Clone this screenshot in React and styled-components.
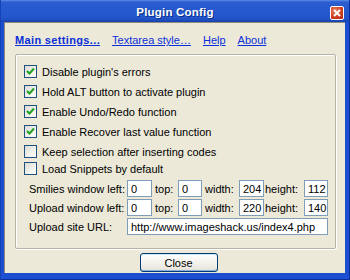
import React from 'react';
import styled, { createGlobalStyle } from 'styled-components';

const GlobalStyle = createGlobalStyle`
  html, body {
    margin: 0;
    padding: 0;
    background: #ffffff;
  }
  body {
    font-family: "Liberation Sans", Arial, sans-serif;
    font-size: 11px;
  }
`;

const Window = styled.div`
  width: 350px;
  height: 280px;
  box-sizing: border-box;
  display: flex;
  flex-direction: column;
  background: #1c4fcf;
  border-left: 1px solid #1642b8;
  border-right: 1px solid #0b2fa0;
  border-bottom: 1px solid #0b2fa0;
`;

const TitleBar = styled.div`
  height: 22px;
  flex: 0 0 22px;
  position: relative;
  display: flex;
  align-items: center;
  justify-content: center;
  background: linear-gradient(
    to bottom,
    #6e9ae8 0px,
    #3a6bd8 1px,
    #2a5ccf 3px,
    #2458cd 12px,
    #2356ca 18px,
    #1b47b8 21px,
    #173fa8 22px
  );
`;

const Title = styled.span`
  color: #ffffff;
  font-weight: bold;
  font-size: 11.5px;
  letter-spacing: 0.2px;
  text-shadow: 1px 1px 0 #0d2e8a;
  margin-top: 2px;
`;

const CloseX = styled.div`
  position: absolute;
  right: 5px;
  top: 6px;
  width: 14px;
  height: 14px;
  border-radius: 2px;
  border: 1px solid #ffffff;
  box-sizing: border-box;
  background: radial-gradient(circle at 35% 30%, #e8805f 0%, #d13f22 55%, #a92a14 100%);
  display: flex;
  align-items: center;
  justify-content: center;
`;

const Frame = styled.div`
  flex: 1;
  display: flex;
  margin: 0 4px 6px 3px;
  border-top: 1px solid #8d8c7d;
  border-left: 1px solid #8d8c7d;
  background: #ece9d8;
`;

const Body = styled.div`
  flex: 1;
  display: flex;
  flex-direction: column;
  padding: 10px 9px 0 10px;
`;

const Tabs = styled.div`
  display: flex;
  gap: 12px;
  height: 14px;
  align-items: center;
`;

const TabLink = styled.a`
  color: #0a2fd8;
  text-decoration: underline;
  font-size: 11px;
  font-weight: ${p => (p.$active ? 'bold' : 'normal')};
  letter-spacing: ${p => (p.$active ? '0.35px' : '0')};
  cursor: pointer;
`;

const Group = styled.div`
  margin-top: 7px;
  height: 195px;
  box-sizing: border-box;
  border: 1px solid #b5b4a6;
  border-radius: 2px;
  box-shadow: inset 1px 1px 0 #ffffff, 1px 1px 0 #ffffff;
  padding: 10px 0 0 8px;
  display: flex;
  flex-direction: column;
`;

const CheckRow = styled.label`
  display: flex;
  align-items: center;
  height: 13px;
  margin-bottom: ${p => (p.$tight ? 4 : 7)}px;
  color: #000000;
`;

const Box = styled.span`
  width: 13px;
  height: 13px;
  box-sizing: border-box;
  border: 1px solid #1c5180;
  background: linear-gradient(135deg, #dcdcd3 0%, #f2f2ee 60%, #ffffff 100%);
  display: flex;
  align-items: center;
  justify-content: center;
  margin-right: 5px;
  flex: 0 0 13px;
`;

const Fields = styled.div`
  display: grid;
  grid-template-columns: 98px 25px 26px 24px 37px 25px 40px 24px;
  grid-auto-rows: 17px;
  row-gap: 2px;
  margin-left: 5px;
  margin-top: -2px;
  align-items: center;
`;

const FieldLabel = styled.span`
  padding-left: ${p => p.$pad || 0}px;
  white-space: nowrap;
  color: #000000;
`;

const Input = styled.div`
  height: 17px;
  box-sizing: border-box;
  border: 1px solid #7f9db9;
  background: #ffffff;
  padding: 0 0 0 3px;
  display: flex;
  align-items: center;
  color: #000000;
  grid-column: ${p => p.$span || 'auto'};
`;

const Footer = styled.div`
  display: flex;
  justify-content: center;
  padding: 4px 0 0 6px;
`;

const Button = styled.button`
  width: 78px;
  height: 19px;
  box-sizing: border-box;
  border: 1px solid #003c74;
  border-radius: 3px;
  background: linear-gradient(to bottom, #ffffff 0%, #f4f3ee 50%, #e8e6dc 90%, #d6d0c5 100%);
  box-shadow: inset 0 1px 0 #cee7ff, inset 0 -1px 0 #89ade4;
  font-family: "Liberation Sans", Arial, sans-serif;
  font-size: 11px;
  color: #000000;
  padding: 0;
`;

const Check = () => (
  <svg width="9" height="9" viewBox="0 0 9 9">
    <path d="M1 4 L3.5 6.5 L8 1.5" fill="none" stroke="#21a121" strokeWidth="2" />
  </svg>
);

const options = [
  { label: "Disable plugin's errors", checked: true },
  { label: 'Hold ALT button to activate plugin', checked: true },
  { label: 'Enable Undo/Redo function', checked: true },
  { label: 'Enable Recover last value function', checked: true },
  { label: 'Keep selection after inserting codes', checked: false, tight: true },
  { label: 'Load Snippets by default', checked: false }
];

const windowRows = [
  { label: 'Smilies window left:', left: '0', top: '0', width: '204', height: '112' },
  { label: 'Upload window left:', left: '0', top: '0', width: '220', height: '140' }
];

export default function App() {
  return (
    <>
      <GlobalStyle />
      <Window>
        <TitleBar>
          <Title>Plugin Config</Title>
          <CloseX>
            <svg width="8" height="8" viewBox="0 0 8 8">
              <path d="M1 1 L7 7 M7 1 L1 7" stroke="#ffffff" strokeWidth="2" />
            </svg>
          </CloseX>
        </TitleBar>
        <Frame>
          <Body>
            <Tabs>
              <TabLink $active>Main settings...</TabLink>
              <TabLink>Textarea style…</TabLink>
              <TabLink>Help</TabLink>
              <TabLink>About</TabLink>
            </Tabs>
            <Group>
              {options.map(o => (
                <CheckRow key={o.label} $tight={o.tight}>
                  <Box>{o.checked && <Check />}</Box>
                  {o.label}
                </CheckRow>
              ))}
              <Fields>
                {windowRows.map(r => (
                  <React.Fragment key={r.label}>
                    <FieldLabel>{r.label}</FieldLabel>
                    <Input>{r.left}</Input>
                    <FieldLabel $pad={3}>top:</FieldLabel>
                    <Input>{r.top}</Input>
                    <FieldLabel $pad={3}>width:</FieldLabel>
                    <Input>{r.width}</Input>
                    <FieldLabel $pad={1}>height:</FieldLabel>
                    <Input>{r.height}</Input>
                  </React.Fragment>
                ))}
                <FieldLabel>Upload site URL:</FieldLabel>
                <Input $span="2 / 9">http://www.imageshack.us/index4.php</Input>
              </Fields>
            </Group>
            <Footer>
              <Button>Close</Button>
            </Footer>
          </Body>
        </Frame>
      </Window>
    </>
  );
}
